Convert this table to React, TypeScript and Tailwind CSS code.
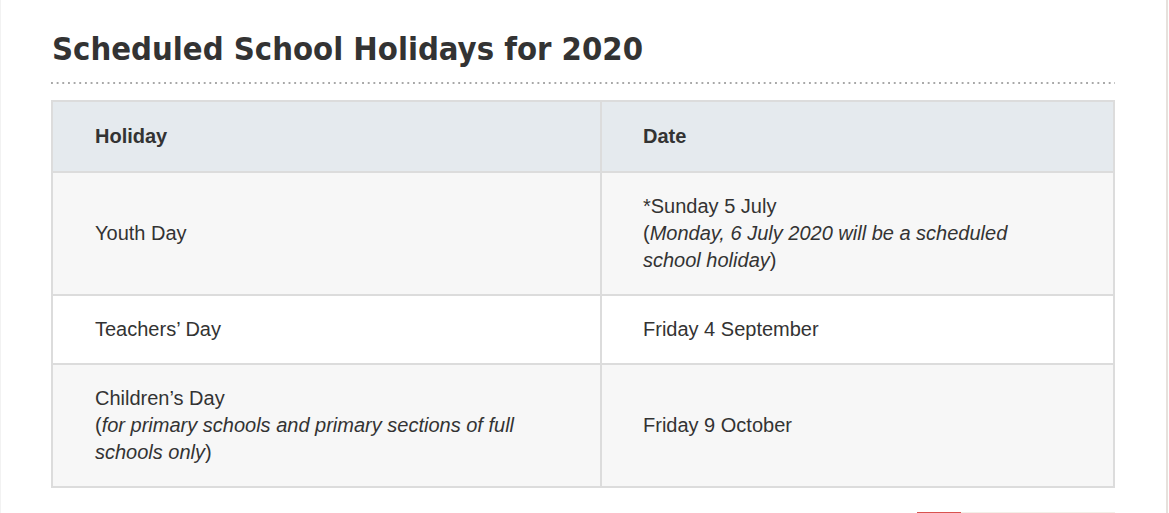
const rows = [
  {
    holiday: <>Youth Day</>,
    date: (
      <>
        *Sunday 5 July
        <br />
        (<em>Monday, 6 July 2020 will be a scheduled school holiday</em>)
      </>
    ),
    bg: "bg-[#f7f7f7]",
  },
  {
    holiday: <>Teachers’ Day</>,
    date: <>Friday 4 September</>,
    bg: "bg-white",
  },
  {
    holiday: (
      <>
        Children’s Day
        <br />
        (<em>for primary schools and primary sections of full schools only</em>)
      </>
    ),
    date: <>Friday 9 October</>,
    bg: "bg-[#f7f7f7]",
  },
];

export default function App() {
  return (
    <div className="w-[1168px] h-[513px] overflow-hidden bg-white border-l border-l-[#f2f2f2] border-r-2 border-r-[#e6e1dc]">
      <div className="pl-[50px] pr-[51px] pt-[27px]">
        <h1 className="font-['DejaVu_Sans_Condensed',sans-serif] font-bold text-[32.5px] leading-[44px] text-[#333] pl-px">
          Scheduled School Holidays for 2020
        </h1>
        <div className="mt-[11px] h-[2px] bg-[linear-gradient(to_right,#a8a8a8_2px,transparent_2px)] bg-[length:5.67px_2px] bg-repeat-x" />
        <table className="mt-[16px] w-full border-collapse border-2 border-[#dcdcdc] font-['Liberation_Sans',Arial,sans-serif] text-[20px] leading-[27px] text-[#333]">
          <colgroup>
            <col className="w-[549px]" />
            <col />
          </colgroup>
          <thead>
            <tr className="bg-[#e5eaee]">
              <th className="border-2 border-[#dcdcdc] text-left font-bold pl-[42px] pr-4 py-[21px]">Holiday</th>
              <th className="border-2 border-[#dcdcdc] text-left font-bold pl-[41px] pr-4 py-[21px]">Date</th>
            </tr>
          </thead>
          <tbody>
            {rows.map((r, i) => (
              <tr key={i} className={r.bg}>
                <td className="border-2 border-[#dcdcdc] pl-[42px] pr-4 py-5 align-middle">
                  <div className="max-w-[440px]">{r.holiday}</div>
                </td>
                <td className="border-2 border-[#dcdcdc] pl-[41px] pr-4 py-5 align-middle">
                  <div className="max-w-[400px]">{r.date}</div>
                </td>
              </tr>
            ))}
          </tbody>
        </table>
        <div className="mt-6 flex justify-end">
          <div className="flex w-[198px] h-[2px]">
            <div className="w-[44px] bg-[#d9534f]" />
            <div className="flex-1 bg-[#f3efe8]" />
          </div>
        </div>
      </div>
    </div>
  );
}
